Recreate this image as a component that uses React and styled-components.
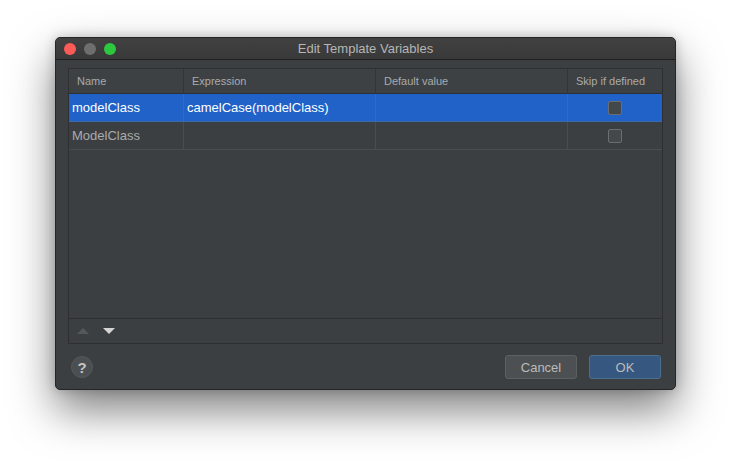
import React from "react";
import styled, { createGlobalStyle } from "styled-components";

const Global = createGlobalStyle`
  html, body { margin: 0; padding: 0; background: #ffffff; }
  body { font-family: "Liberation Sans", Arial, sans-serif; }
`;

const Page = styled.div`
  width: 732px;
  height: 464px;
  box-sizing: border-box;
  padding: 37px 0 0 55px;
`;

const Window = styled.div`
  width: 621px;
  height: 353px;
  box-sizing: border-box;
  background: #3c3f41;
  border: 1px solid #262626;
  border-radius: 5px;
  overflow: hidden;
  display: flex;
  flex-direction: column;
  box-shadow: 0 20px 44px rgba(0, 0, 0, 0.5), 0 0 12px rgba(0, 0, 0, 0.2);
`;

const TitleBar = styled.div`
  position: relative;
  height: 21px;
  flex: none;
  background: linear-gradient(#414141, #393939);
  border-bottom: 1px solid #1f1f1f;
  display: flex;
  align-items: center;
  justify-content: center;
  color: #b5b5b5;
  font-size: 13px;
`;

const Lights = styled.div`
  position: absolute;
  left: 8px;
  top: 5px;
  display: flex;
  gap: 8px;
`;

const Light = styled.span`
  width: 12px;
  height: 12px;
  border-radius: 50%;
  background: ${(p) => p.$c};
`;

const Body = styled.div`
  flex: 1;
  display: flex;
  flex-direction: column;
  padding: 8px 12px 10px 12px;
`;

const Table = styled.div`
  height: 276px;
  box-sizing: border-box;
  border: 1px solid #2d2f30;
  display: flex;
  flex-direction: column;
`;

const Grid = styled.div`
  flex: 1;
  display: grid;
  grid-template-columns: 115px 192px 192px 1fr;
  grid-template-rows: 25px;
  grid-auto-rows: 28px;
  align-content: start;
`;

const Cell = styled.div`
  box-sizing: border-box;
  display: flex;
  align-items: center;
  justify-content: ${(p) => (p.$center ? "center" : "flex-start")};
  padding-left: ${(p) => (p.$center ? "0" : p.$head ? "8px" : "3px")};
  border-right: ${(p) => (p.$last ? "none" : "1px solid #4a4d4f")};
  border-bottom: 1px solid #4a4d4f;
  background: ${(p) => (p.$sel ? "#2062c8" : "transparent")};
  color: ${(p) => (p.$sel ? "#ffffff" : "#a9abad")};
  font-size: ${(p) => (p.$head ? "11px" : "13px")};
  ${(p) => (p.$head ? "border-right-color: #333638; border-bottom-color: #2d2f30; background: #3d4143;" : "")}
  ${(p) => (p.$sel ? "border-right-color: #3a6aa8; border-bottom-color: #3a6aa8;" : "")}
`;

const Check = styled.span`
  width: 14px;
  height: 14px;
  box-sizing: border-box;
  border: 1px solid #6b6e70;
  border-radius: 2px;
  background: #43494a;
`;

const Toolbar = styled.div`
  height: 24px;
  flex: none;
  border-top: 1px solid #2d2f30;
  display: flex;
  align-items: center;
  gap: 14px;
  padding-left: 8px;
`;

const Arrow = styled.span`
  width: 0;
  height: 0;
  border-left: 6px solid transparent;
  border-right: 6px solid transparent;
  ${(p) =>
    p.$up
      ? "border-bottom: 6px solid #54585a;"
      : "border-top: 6px solid #d4d4d4;"}
`;

const Footer = styled.div`
  margin-top: 11px;
  display: flex;
  align-items: center;
  padding: 0 2px 0 3px;
`;

const Help = styled.div`
  width: 22px;
  height: 22px;
  box-sizing: border-box;
  border-radius: 50%;
  background: #4b4f51;
  border: 1px solid #55595b;
  color: #c4c4c4;
  font-size: 15px;
  font-weight: bold;
  display: flex;
  align-items: center;
  justify-content: center;
`;

const Spacer = styled.div`
  flex: 1;
`;

const Button = styled.div`
  width: 72px;
  height: 24px;
  box-sizing: border-box;
  border-radius: 3px;
  display: flex;
  align-items: center;
  justify-content: center;
  font-size: 13px;
  color: #bbbbbb;
  background: ${(p) => (p.$primary ? "#365880" : "#4c5052")};
  border: 1px solid ${(p) => (p.$primary ? "#4c708c" : "#5e6060")};
  margin-left: ${(p) => (p.$primary ? "12px" : "0")};
`;

const rows = [
  { name: "modelClass", expr: "camelCase(modelClass)", def: "", sel: true },
  { name: "ModelClass", expr: "", def: "", sel: false },
];

export default function App() {
  return (
    <>
      <Global />
      <Page>
        <Window>
          <TitleBar>
            <Lights>
              <Light $c="#fc5b57" />
              <Light $c="#6e6e6e" />
              <Light $c="#2bc840" />
            </Lights>
            Edit Template Variables
          </TitleBar>
          <Body>
            <Table>
              <Grid>
                <Cell $head>Name</Cell>
                <Cell $head>Expression</Cell>
                <Cell $head>Default value</Cell>
                <Cell $head $last>Skip if defined</Cell>
                {rows.map((r) => (
                  <React.Fragment key={r.name}>
                    <Cell $sel={r.sel}>{r.name}</Cell>
                    <Cell $sel={r.sel}>{r.expr}</Cell>
                    <Cell $sel={r.sel}>{r.def}</Cell>
                    <Cell $sel={r.sel} $last $center>
                      <Check />
                    </Cell>
                  </React.Fragment>
                ))}
              </Grid>
              <Toolbar>
                <Arrow $up />
                <Arrow />
              </Toolbar>
            </Table>
            <Footer>
              <Help>?</Help>
              <Spacer />
              <Button>Cancel</Button>
              <Button $primary>OK</Button>
            </Footer>
          </Body>
        </Window>
      </Page>
    </>
  );
}
